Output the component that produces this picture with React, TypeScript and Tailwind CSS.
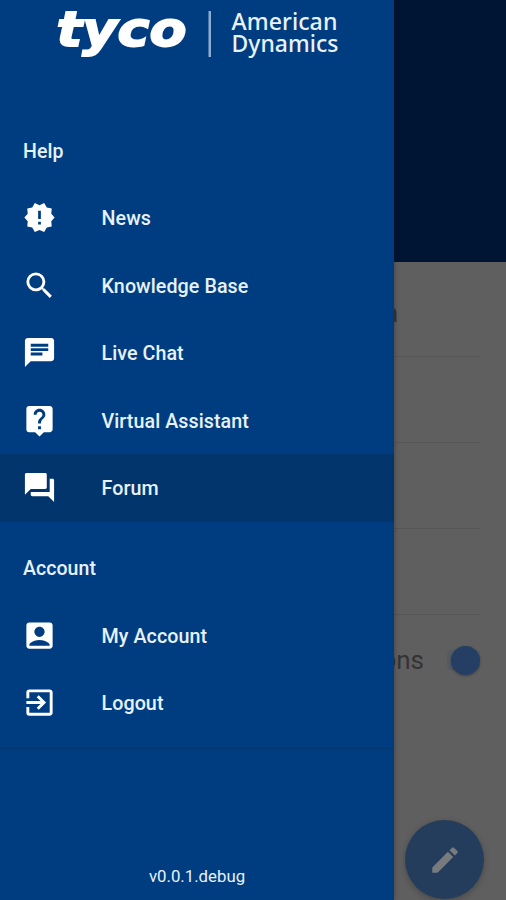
import React from 'react';
import { clsx } from 'clsx';
import type { IconType } from 'react-icons';
import {
  MdAccountBox,
  MdChat,
  MdEdit,
  MdExitToApp,
  MdForum,
  MdLiveHelp,
  MdNewReleases,
  MdSearch,
} from 'react-icons/md';

interface MenuItem {
  label: string;
  icon: IconType;
  active?: boolean;
}

const helpItems: MenuItem[] = [
  { label: 'News', icon: MdNewReleases },
  { label: 'Knowledge Base', icon: MdSearch },
  { label: 'Live Chat', icon: MdChat },
  { label: 'Virtual Assistant', icon: MdLiveHelp },
  { label: 'Forum', icon: MdForum, active: true },
];

const accountItems: MenuItem[] = [
  { label: 'My Account', icon: MdAccountBox },
  { label: 'Logout', icon: MdExitToApp },
];

const Logo: React.FC = () => (
  <svg width="394" height="72" viewBox="0 0 394 72" fill="#fff" className="block shrink-0">
    <text
      x="56.5"
      y="45.5"
      fontFamily="DejaVu Sans, sans-serif"
      fontWeight="700"
      fontStyle="italic"
      fontSize="47.5"
      stroke="#fff"
      strokeWidth="1.8"
      strokeLinejoin="miter"
      textLength="130"
      lengthAdjust="spacingAndGlyphs"
    >
      tyco
    </text>
    <rect x="208.5" y="11" width="2.5" height="46" fill="#8fadd0" />
    <text fontFamily="Noto Sans, sans-serif" fontWeight="500" fontSize="23.5" fill="#e8f2fa">
      <tspan x="231.5" y="30" textLength="106" lengthAdjust="spacingAndGlyphs">American</tspan>
      <tspan x="231.5" y="51.5" textLength="107" lengthAdjust="spacingAndGlyphs">Dynamics</tspan>
    </text>
  </svg>
);

const MenuSection: React.FC<{ title: string; items: MenuItem[] }> = ({ title, items }) => (
  <section>
    <h2 className="flex h-[67px] items-center pt-[2px] pl-[23px] text-[19.5px]">{title}</h2>
    <ul>
      {items.map(({ label, icon: Icon, active }) => (
        <li
          key={label}
          className={clsx('flex h-[67.5px] items-center pl-[22px]', active && 'bg-[#02356c]')}
        >
          <span className="flex size-[35px] items-center justify-center text-white">
            <Icon className={label === 'News' ? 'size-[33px]' : 'size-[35px]'} />
          </span>
          <span className="ml-[44.5px] pt-[3px] text-[19.7px]">{label}</span>
        </li>
      ))}
    </ul>
  </section>
);

const Drawer: React.FC = () => (
  <nav className="absolute inset-y-0 left-0 flex w-[394px] flex-col bg-[#003c80] font-[Roboto,sans-serif] font-medium tracking-[0.06px] text-[#e6f2fa] shadow-[0_0_5px_rgba(0,0,0,0.35)]">
    <Logo />
    <div className="mt-[45px]">
      <MenuSection title="Help" items={helpItems} />
    </div>
    <div className="mt-[13px]">
      <MenuSection title="Account" items={accountItems} />
    </div>
    <div className="mt-[11px] h-px bg-[#023770]" />
    <p className="mt-auto pb-[12px] text-center text-[16.8px] leading-6 font-normal tracking-normal">v0.0.1.debug</p>
  </nav>
);

const Page: React.FC = () => (
  <main className="flex h-full flex-col bg-[#5f5f5f] font-[Roboto,sans-serif] text-[26px] text-[#343434]">
    <header className="h-[262px] bg-[#001433]" />
    <div className="flex flex-col pr-[26px]">
      <div className="flex h-[95px] items-center justify-end border-b border-[#565656] pr-[82px]">
        <span className="mt-2">Notification</span>
      </div>
      <div className="h-[86px] border-b border-[#565656]" />
      <div className="h-[86px] border-b border-[#565656]" />
      <div className="h-[86px] border-b border-[#565656]" />
      <div className="flex h-[90px] items-center justify-end">
        <span>Notifications</span>
        <div className="ml-[23px] flex h-5 w-[33px] items-center justify-end rounded-[4px] bg-[#555b62]">
          <div className="size-[29px] shrink-0 rounded-full bg-[#243f63] shadow-[0_1px_3px_rgba(0,0,0,0.3)]" />
        </div>
      </div>
    </div>
    <button className="absolute top-[820px] left-[405px] flex size-[79px] items-center justify-center rounded-full bg-[#243d5c] shadow-[0_2px_6px_rgba(0,0,0,0.25)]">
      <MdEdit className="size-[34px] text-[#777b7e]" />
    </button>
  </main>
);

export default function App() {
  return (
    <div className="relative h-[900px] w-[506px] overflow-hidden">
      <Page />
      <Drawer />
    </div>
  );
}
